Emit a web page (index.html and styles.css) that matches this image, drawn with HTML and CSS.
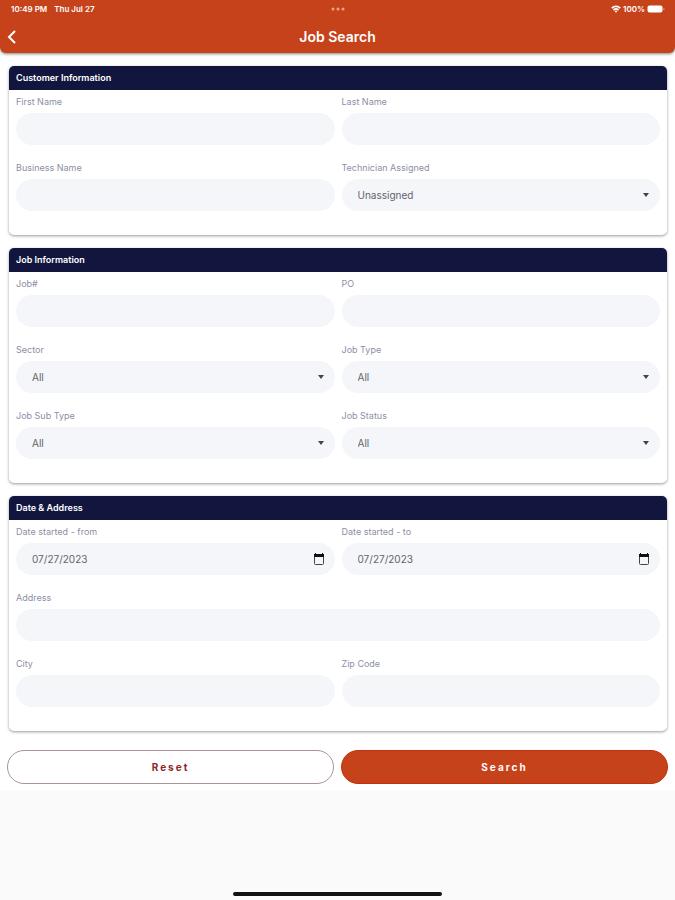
FILE: index.html
```html
<!DOCTYPE html>
<html lang="en">
<head>
    <meta charset="UTF-8">
    <meta name="viewport" content="width=device-width, initial-scale=1.0">
    <title>Job Search</title>
    <link rel="stylesheet" href="styles.css">
</head>
<body>
    <header class="app-header">
        <div class="status-bar">
            <div class="status-left">
                <span>10:49 PM</span>
                <span>Thu Jul 27</span>
            </div>
            <svg class="dots" width="14" height="4" viewBox="0 0 14 4" aria-hidden="true">
                <circle cx="2" cy="2" r="1.5"/>
                <circle cx="7" cy="2" r="1.5"/>
                <circle cx="12" cy="2" r="1.5"/>
            </svg>
            <div class="status-right">
                <svg width="10" height="8" viewBox="0 0 10 8" aria-hidden="true">
                    <path d="M5 7.8 3.5 6.1a2.2 2.2 0 0 1 3 0z" fill="#fff"/>
                    <path d="M2.5 5a3.7 3.7 0 0 1 5 0M.8 3.1a6.2 6.2 0 0 1 8.4 0" fill="none" stroke="#fff" stroke-width="1.8"/>
                </svg>
                <span>100%</span>
                <svg width="18" height="8" viewBox="0 0 18 8" aria-hidden="true">
                    <rect x="0.5" y="0.5" width="15" height="7" rx="2" fill="#fff"/>
                    <path d="M16.5 2.8v2.4q1-.4 1-1.2t-1-1.2z" fill="#e9a78f"/>
                </svg>
            </div>
        </div>
        <div class="title-bar">
            <button type="button" class="back-btn" aria-label="Back">
                <svg width="10" height="14" viewBox="0 0 10 14" aria-hidden="true">
                    <path d="M8 1 2 7l6 6" fill="none" stroke="#fff" stroke-width="2"/>
                </svg>
            </button>
            <h1>Job Search</h1>
        </div>
    </header>

    <form class="search-form">
        <section class="card">
            <h2>Customer Information</h2>
            <div class="card-body">
                <div class="field">
                    <label for="firstName">First Name</label>
                    <input type="text" id="firstName">
                </div>
                <div class="field">
                    <label for="lastName">Last Name</label>
                    <input type="text" id="lastName">
                </div>
                <div class="field">
                    <label for="businessName">Business Name</label>
                    <input type="text" id="businessName">
                </div>
                <div class="field">
                    <label for="technician">Technician Assigned</label>
                    <select id="technician"><option>Unassigned</option></select>
                </div>
            </div>
        </section>

        <section class="card">
            <h2>Job Information</h2>
            <div class="card-body">
                <div class="field">
                    <label for="jobNumber">Job#</label>
                    <input type="text" id="jobNumber">
                </div>
                <div class="field">
                    <label for="po">PO</label>
                    <input type="text" id="po">
                </div>
                <div class="field">
                    <label for="sector">Sector</label>
                    <select id="sector"><option>All</option></select>
                </div>
                <div class="field">
                    <label for="jobType">Job Type</label>
                    <select id="jobType"><option>All</option></select>
                </div>
                <div class="field">
                    <label for="jobSubType">Job Sub Type</label>
                    <select id="jobSubType"><option>All</option></select>
                </div>
                <div class="field">
                    <label for="jobStatus">Job Status</label>
                    <select id="jobStatus"><option>All</option></select>
                </div>
            </div>
        </section>

        <section class="card">
            <h2>Date &amp; Address</h2>
            <div class="card-body">
                <div class="field">
                    <label for="dateFrom">Date started - from</label>
                    <input type="date" id="dateFrom" value="2023-07-27">
                </div>
                <div class="field">
                    <label for="dateTo">Date started - to</label>
                    <input type="date" id="dateTo" value="2023-07-27">
                </div>
                <div class="field field-wide">
                    <label for="address">Address</label>
                    <input type="text" id="address">
                </div>
                <div class="field">
                    <label for="city">City</label>
                    <input type="text" id="city">
                </div>
                <div class="field">
                    <label for="zip">Zip Code</label>
                    <input type="text" id="zip">
                </div>
            </div>
        </section>

        <div class="actions">
            <button type="reset" class="btn btn-reset">Reset</button>
            <button type="submit" class="btn btn-search">Search</button>
        </div>
    </form>

    <footer class="home-area">
        <div class="home-indicator"></div>
    </footer>
</body>
</html>
```
FILE: styles.css
```css
* {
    box-sizing: border-box;
    font-family: Inter, "Liberation Sans", sans-serif;
}

body {
    margin: 0;
    min-height: 100vh;
    display: flex;
    flex-direction: column;
    background: #fff;
}

/* header */
.app-header {
    background: #c6421a;
    color: #fff;
    border-radius: 0 0 6px 6px;
    box-shadow: 0 1px 3px rgba(0, 0, 0, 0.5);
}

.status-bar {
    display: grid;
    grid-template-columns: 1fr auto 1fr;
    align-items: center;
    height: 17px;
    padding: 0 10px 0 11px;
    font-size: 8px;
    font-weight: 600;
}

.status-left,
.status-right {
    display: flex;
    align-items: center;
}

.status-left {
    gap: 7px;
}

.status-right {
    justify-content: flex-end;
    gap: 2px;
}

.dots {
    fill: #eda58a;
}

.title-bar {
    display: grid;
    grid-template-columns: 24px 1fr 24px;
    align-items: center;
    height: 36px;
    padding: 4px 7px 0;
}

.back-btn {
    display: flex;
    padding: 0;
    border: none;
    background: none;
    cursor: pointer;
}

h1 {
    margin: 0;
    font-size: 14px;
    font-weight: 600;
    line-height: 20px;
    text-align: center;
}

/* form cards */
.search-form {
    display: flex;
    flex-direction: column;
    gap: 13px;
    padding: 13px 7px 6px;
}

.card {
    margin: 0 1px 0 2px;
    border-radius: 5px;
    box-shadow: 0 1px 3px rgba(0, 0, 0, 0.4);
    overflow: hidden;
}

.card h2 {
    margin: 0;
    padding: 0 7px;
    background: #12163f;
    color: #fff;
    font-size: 9px;
    font-weight: 600;
    line-height: 24px;
}

.card-body {
    display: grid;
    grid-template-columns: 1fr 1fr;
    gap: 16px 7px;
    padding: 5px 7px 24px;
}

.field {
    display: flex;
    flex-direction: column;
    gap: 4px;
}

.field-wide {
    grid-column: 1 / -1;
}

label {
    color: #8c8fa5;
    font-size: 9px;
    line-height: 14px;
}

input,
select {
    width: 100%;
    height: 32px;
    padding: 0 16px;
    border: none;
    border-radius: 16px;
    background-color: #f4f6fa;
    color: #63656b;
    font-size: 10px;
}

select {
    appearance: none;
    background-image: url("data:image/svg+xml,%3Csvg xmlns='http://www.w3.org/2000/svg' width='6' height='4'%3E%3Cpath d='M0 0h6L3 4z' fill='%23444'/%3E%3C/svg%3E");
    background-repeat: no-repeat;
    background-position: right 11px center;
}

input[type="date"] {
    padding-right: 10px;
}

input::-webkit-datetime-edit,
input::-webkit-datetime-edit-fields-wrapper,
input::-webkit-datetime-edit-month-field,
input::-webkit-datetime-edit-day-field,
input::-webkit-datetime-edit-year-field,
input::-webkit-datetime-edit-text {
    padding: 0;
}

input::-webkit-calendar-picker-indicator {
    width: 12px;
    height: 12px;
    padding: 0;
    background: url("data:image/svg+xml,%3Csvg xmlns='http://www.w3.org/2000/svg' width='12' height='12'%3E%3Crect x='1.5' y='1.5' width='9' height='10' rx='1' fill='none' stroke='%23444'/%3E%3Cpath d='M1 1h1V0h1v1h6V0h1v1h1v3H1z' fill='%23111'/%3E%3C/svg%3E") no-repeat center;
}

/* buttons */
.actions {
    display: grid;
    grid-template-columns: 1fr 1fr;
    gap: 7px;
    margin-top: 6px;
}

.btn {
    height: 34px;
    border-radius: 17px;
    font-size: 10px;
    font-weight: 700;
    letter-spacing: 2px;
    cursor: pointer;
}

.btn-reset {
    border: 1px solid #a99598;
    background: #fff;
    color: #8f2528;
}

.btn-search {
    border: 1px solid #c4300f;
    background: #c6421a;
    color: #fff;
}

/* bottom area */
.home-area {
    flex: 1;
    display: flex;
    justify-content: center;
    align-items: flex-end;
    min-height: 24px;
    padding-bottom: 4px;
    background: #fafafa;
}

.home-indicator {
    width: 31%;
    height: 4px;
    border-radius: 2px;
    background: #111;
}
```
